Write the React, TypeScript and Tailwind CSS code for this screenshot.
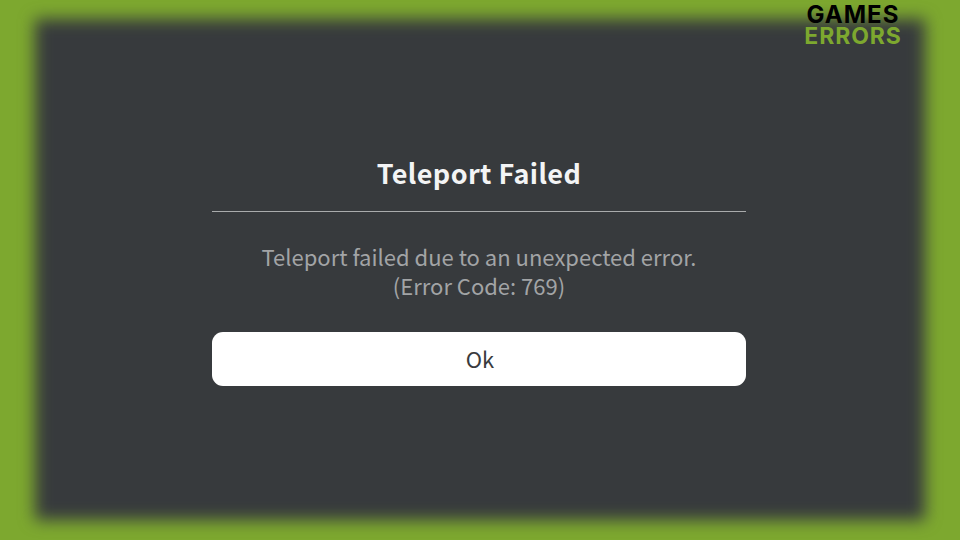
const Logo = () => (
  <div className="absolute top-[4px] left-[804px] flex w-[98px] flex-col items-center font-['Inter',sans-serif] font-bold whitespace-nowrap">
    <span className="text-[24px] leading-[21px] tracking-[1px] text-black">GAMES</span>
    <span className="text-[23px] leading-[22px] tracking-[0.9px] text-[#7da82f]">ERRORS</span>
  </div>
);

const ErrorDialog = () => (
  <div className="mr-[2px] flex w-[534px] flex-col text-center font-['Noto_Sans_CJK_SC','Noto_Sans',sans-serif]">
    <h1 className="flex h-[62px] items-start justify-center border-b border-[#a9abac] pt-[3px] text-[27px] leading-[40px] font-bold tracking-[0.4px] whitespace-nowrap text-[#f3f4f5]">
      Teleport Failed
    </h1>
    <p className="mt-[30px] text-[22px] leading-[29px] whitespace-nowrap text-[#a2a4a6]">
      Teleport failed due to an unexpected error.
      <br />
      (Error Code: 769)
    </p>
    <button className="mt-[32px] flex h-[54px] items-center justify-center rounded-[11px] bg-white pb-px pl-[2px] text-[22px] text-[#393b3d]">
      Ok
    </button>
  </div>
);

export default function App() {
  return (
    <main className="relative isolate flex h-[540px] w-[960px] justify-center overflow-hidden bg-[#7da82f] pt-[150px]">
      {/* Soft-edged dark panel behind the dialog */}
      <div className="absolute top-[19px] left-[35px] -z-10 h-[501px] w-[890px] bg-[#373a3d] blur-[8px]" />
      <ErrorDialog />
      <Logo />
    </main>
  );
}
